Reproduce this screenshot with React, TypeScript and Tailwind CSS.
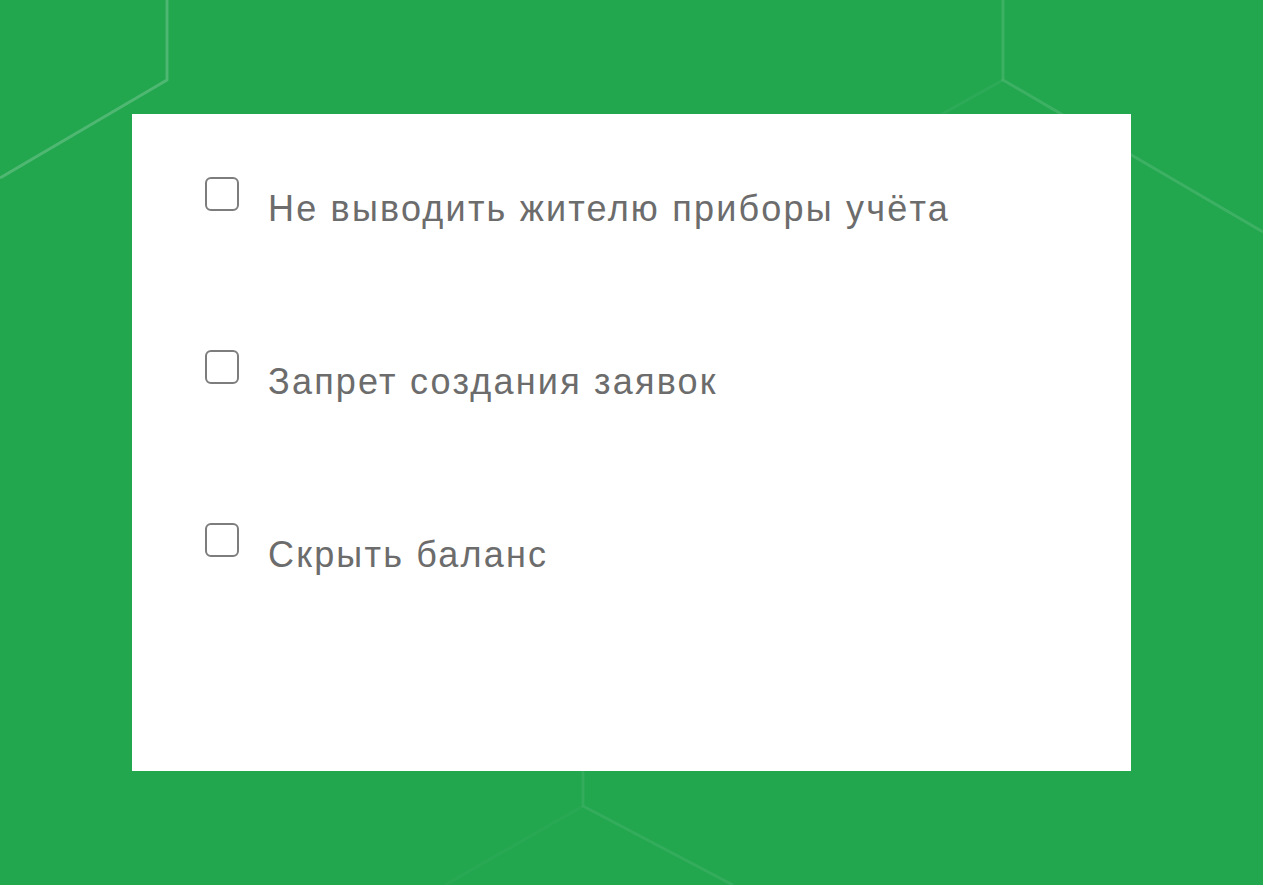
import React from "react";

const options = [
  "Не выводить жителю приборы учёта",
  "Запрет создания заявок",
  "Скрыть баланс",
];

function HexLines() {
  return (
    <svg
      className="absolute inset-0 w-full h-full pointer-events-none"
      viewBox="0 0 1263 885"
      preserveAspectRatio="none"
    >
      <g fill="none" strokeWidth="3" strokeLinejoin="round">
        <polyline points="167,0 167,80 0,178" stroke="#ffffff" strokeOpacity="0.2" />
        <polyline points="1003,0 1003,80 1263,232" stroke="#ffffff" strokeOpacity="0.12" />
        <polyline points="1003,80 860,160" stroke="#ffffff" strokeOpacity="0.05" />
        <polyline points="583,700 583,806 733,885" stroke="#ffffff" strokeOpacity="0.08" />
        <polyline points="583,806 445,885" stroke="#ffffff" strokeOpacity="0.03" />
      </g>
    </svg>
  );
}

function Option({ label }: { label: string }) {
  return (
    <label className="flex items-start gap-[29px] h-[173px] cursor-pointer">
      <span className="w-[34px] h-[34px] shrink-0 rounded-[6px] border-2 border-[#7d7d7d] bg-white" />
      <span className="mt-[14px] text-[36px] leading-[36px] tracking-[2.2px] text-[#6c6c6c]">
        {label}
      </span>
    </label>
  );
}

export default function App() {
  return (
    <div
      className="relative w-[1263px] h-[885px] overflow-hidden bg-[#22a64e]"
      style={{ fontFamily: '"Liberation Sans", Arial, sans-serif' }}
    >
      <HexLines />
      <div className="relative pt-[114px] pl-[132px]">
        <div className="w-[999px] h-[657px] bg-white pt-[63px] pl-[73px]">
          {options.map((o) => (
            <Option key={o} label={o} />
          ))}
        </div>
      </div>
    </div>
  );
}
